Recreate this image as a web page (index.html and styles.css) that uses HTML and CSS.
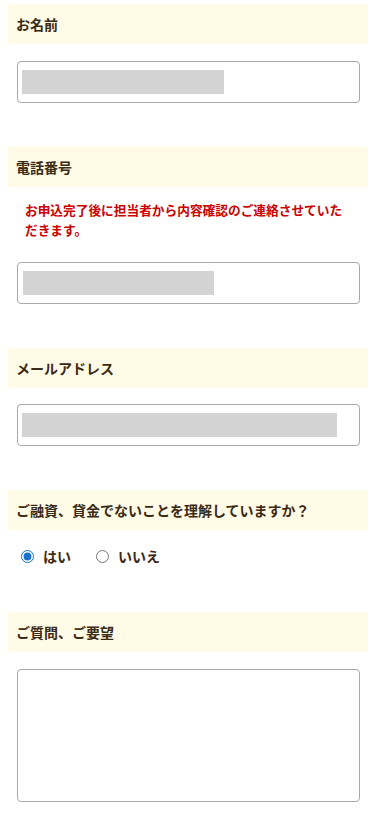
FILE: index.html
```html
<!DOCTYPE html>
<html lang="ja">
<head>
<meta charset="utf-8">
<meta name="viewport" content="width=device-width, initial-scale=1">
<title>お問い合わせフォーム</title>
<link rel="stylesheet" href="styles.css">
</head>
<body>
<form class="form">
  <div class="label label-first">お名前</div>
  <div class="field field-first"><span class="fill fill-name"></span></div>

  <div class="label">電話番号</div>
  <p class="note">お申込完了後に担当者から内容確認のご連絡させていただきます。</p>
  <div class="field field-after-note"><span class="fill fill-tel"></span></div>

  <div class="label">メールアドレス</div>
  <div class="field"><span class="fill fill-mail"></span></div>

  <div class="label">ご融資、貸金でないことを理解していますか？</div>
  <div class="radios">
    <label class="radio"><input type="radio" name="agree" checked><span>はい</span></label>
    <label class="radio"><input type="radio" name="agree"><span>いいえ</span></label>
  </div>

  <div class="label label-last">ご質問、ご要望</div>
  <textarea class="textarea"></textarea>
</form>
</body>
</html>
```

FILE: styles.css
```css
html, body {
  margin: 0;
  padding: 0;
  background: #ffffff;
}

body {
  font-family: "Noto Sans CJK JP", "Noto Sans", sans-serif;
  color: #3a2a14;
}

.form {
  display: flex;
  flex-direction: column;
  width: 360px;
  padding: 4px 7px 0 8px;
}

.label {
  display: flex;
  align-items: center;
  height: 40px;
  padding: 0 8px;
  margin-top: 44px;
  background: #fffbe6;
  font-size: 14px;
  font-weight: 700;
  color: #3a2a14;
}

.label-first {
  margin-top: 0;
}

.label-last {
  margin-top: 47px;
}

.field {
  display: flex;
  align-items: center;
  box-sizing: border-box;
  width: 343px;
  height: 42px;
  margin: 16px 0 0 9px;
  padding-left: 4px;
  border: 1px solid #a8a8a8;
  border-radius: 4px;
  background: #fff;
}

.field-first {
  margin-top: 17px;
}

.field-after-note {
  margin-top: 22px;
}

.fill {
  display: block;
  height: 24px;
  background: #d3d3d3;
}

.fill-name {
  width: 202px;
}

.fill-tel {
  width: 191px;
  margin-left: 1px;
}

.fill-mail {
  width: 315px;
}

.note {
  margin: 13px 0 0 0;
  padding: 0 14px 0 17px;
  font-size: 12.7px;
  line-height: 20px;
  font-weight: 700;
  color: #cc0000;
}

.radios {
  display: flex;
  align-items: center;
  gap: 25px;
  height: 18px;
  margin: 17px 0 0 13px;
}

.radio {
  display: flex;
  align-items: center;
  gap: 9px;
  font-size: 14px;
  font-weight: 700;
  color: #3a2a14;
}

.radio input {
  width: 13px;
  height: 13px;
  margin: 0;
  accent-color: #1a73c8;
}

.textarea {
  display: block;
  box-sizing: border-box;
  width: 343px;
  height: 133px;
  margin: 17px 0 0 9px;
  border: 1px solid #a8a8a8;
  border-radius: 4px;
  resize: none;
  background: #fff;
}
```
